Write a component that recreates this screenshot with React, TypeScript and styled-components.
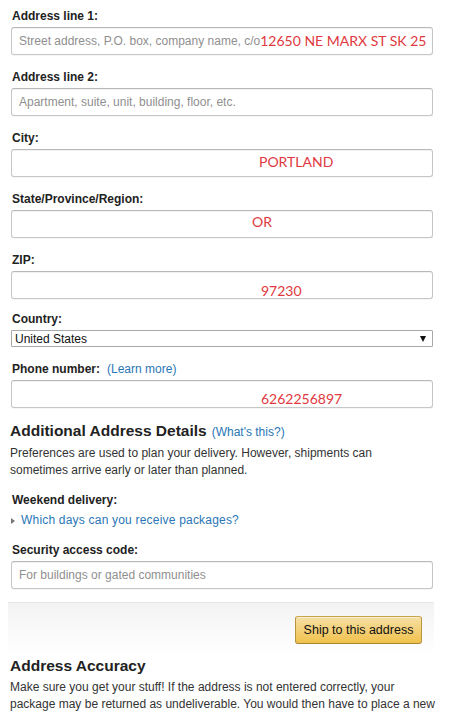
import React from "react";
import styled, { createGlobalStyle } from "styled-components";

const Global = createGlobalStyle`
  html, body { margin: 0; padding: 0; background: #fff; }
  body { font-family: "Liberation Sans", Arial, sans-serif; color: #111; }
`;

const Page = styled.div`
  width: 422px;
  padding: 8px 19px 0 11px;
`;

const Group = styled.div<{ $gap?: number }>`
  display: flex;
  flex-direction: column;
  margin-bottom: ${(p) => (p.$gap ?? 14)}px;
`;

const Label = styled.div`
  font-size: 12px;
  font-weight: bold;
  line-height: 17px;
  color: #222;
  padding-left: 1px;
  margin-bottom: 2px;
  display: flex;
  align-items: baseline;
  gap: 7px;
`;

const Link = styled.span`
  font-weight: normal;
  font-size: 12px;
  color: #2a76b6;
`;

const Box = styled.div`
  box-sizing: border-box;
  height: 28px;
  border: 1px solid #c6c6c6;
  border-top-color: #b8b8b8;
  border-radius: 3px;
  box-shadow: 0 1px 0 rgba(0, 0, 0, 0.04), inset 0 1px 0 rgba(0, 0, 0, 0.05);
  background: #fff;
  display: flex;
  align-items: center;
  padding-left: 7px;
  overflow: hidden;
  white-space: nowrap;
`;

const Placeholder = styled.span`
  font-size: 12px;
  color: #8f8f8f;
`;

const Entered = styled.span<{ $x?: number; $dy?: number }>`
  font-family: Lato, "Open Sans", sans-serif;
  font-size: 14px;
  color: #e0383e;
  margin-left: ${(p) => p.$x ?? 0}px;
  transform: translateY(${(p) => p.$dy ?? 0}px);
`;

const Select = styled.div`
  box-sizing: border-box;
  height: 17px;
  border: 1px solid #a9a9a9;
  border-radius: 1px;
  background: #fff;
  display: flex;
  align-items: center;
  justify-content: space-between;
  padding: 0 6px 0 3px;
  font-size: 12px;
  color: #111;
`;

const Arrow = styled.span`
  width: 0;
  height: 0;
  border-left: 3.5px solid transparent;
  border-right: 3.5px solid transparent;
  border-top: 6px solid #111;
`;

const Heading = styled.h2`
  margin: 0 0 0 -1px;
  font-size: 15.5px;
  font-weight: bold;
  line-height: 20px;
  color: #222;
  display: flex;
  align-items: baseline;
  gap: 5px;
`;

const Section = styled.section<{ $top: number }>`
  margin-top: ${(p) => p.$top}px;
`;

const Para = styled.p`
  margin: 3px 0 0 -1px;
  font-size: 12px;
  line-height: 17px;
  color: #333;
  white-space: nowrap;
`;

const Expander = styled.div`
  display: flex;
  align-items: center;
  gap: 6px;
  font-size: 12px;
  line-height: 17px;
  color: #2a76b6;
  margin-top: 3px;
  letter-spacing: 0.2px;
`;

const Caret = styled.span`
  width: 0;
  height: 0;
  border-top: 3px solid transparent;
  border-bottom: 3px solid transparent;
  border-left: 4px solid #777;
`;

const Band = styled.div`
  margin: 13px -1px 0 -3px;
  border-top: 1px solid #e6e6e6;
  background: linear-gradient(#f3f3f3, #fff);
  padding: 13px 12px 11px 0;
  display: flex;
  justify-content: flex-end;
`;

const Button = styled.button`
  box-sizing: border-box;
  width: 127px;
  height: 28px;
  border: 1px solid #a88734;
  border-color: #c9a54a #b8943c #a88734;
  border-radius: 3px;
  background: linear-gradient(#f7dfa5, #f0c14b);
  box-shadow: inset 0 1px 0 rgba(255, 255, 255, 0.5);
  font-family: "Liberation Sans", Arial, sans-serif;
  font-size: 12.5px;
  color: #111;
  padding: 0;
`;

function TextField({ label, placeholder, value, x, dy, gap, extra }: {
  label: string;
  placeholder?: string;
  value?: string;
  x?: number;
  dy?: number;
  gap?: number;
  extra?: React.ReactNode;
}) {
  return (
    <Group $gap={gap}>
      <Label>{label}{extra}</Label>
      <Box>
        {placeholder && <Placeholder>{placeholder}</Placeholder>}
        {value && <Entered $x={x} $dy={dy}>{value}</Entered>}
      </Box>
    </Group>
  );
}

export default function App() {
  return (
    <>
      <Global />
      <Page>
        <TextField
          label="Address line 1:"
          placeholder="Street address, P.O. box, company name, c/o"
          value="12650 NE MARX ST SK 25"
          dy={-1}
        />
        <TextField label="Address line 2:" placeholder="Apartment, suite, unit, building, floor, etc." />
        <TextField label="City:" value="PORTLAND" x={240} dy={-2} />
        <TextField label="State/Province/Region:" value="OR" x={233} dy={-3} />
        <TextField label="ZIP:" value="97230" x={242} dy={5} gap={12} />
        <Group>
          <Label>Country:</Label>
          <Select>
            United States
            <Arrow />
          </Select>
        </Group>
        <TextField
          label="Phone number:"
          value="6262256897"
          x={242}
          dy={4}
          gap={0}
          extra={<Link>(Learn more)</Link>}
        />
        <Section $top={13}>
          <Heading>
            Additional Address Details <Link>(What's this?)</Link>
          </Heading>
          <Para>
            Preferences are used to plan your delivery. However, shipments can
            <br />
            sometimes arrive early or later than planned.
          </Para>
        </Section>
        <Section $top={13}>
          <Label>Weekend delivery:</Label>
          <Expander>
            <Caret />
            Which days can you receive packages?
          </Expander>
        </Section>
        <Section $top={13}>
          <TextField label="Security access code:" placeholder="For buildings or gated communities" gap={0} />
        </Section>
        <Band>
          <Button>Ship to this address</Button>
        </Band>
        <Section $top={1}>
          <Heading>Address Accuracy</Heading>
          <Para>
            Make sure you get your stuff! If the address is not entered correctly, your
            <br />
            package may be returned as undeliverable. You would then have to place a new
          </Para>
        </Section>
      </Page>
    </>
  );
}
